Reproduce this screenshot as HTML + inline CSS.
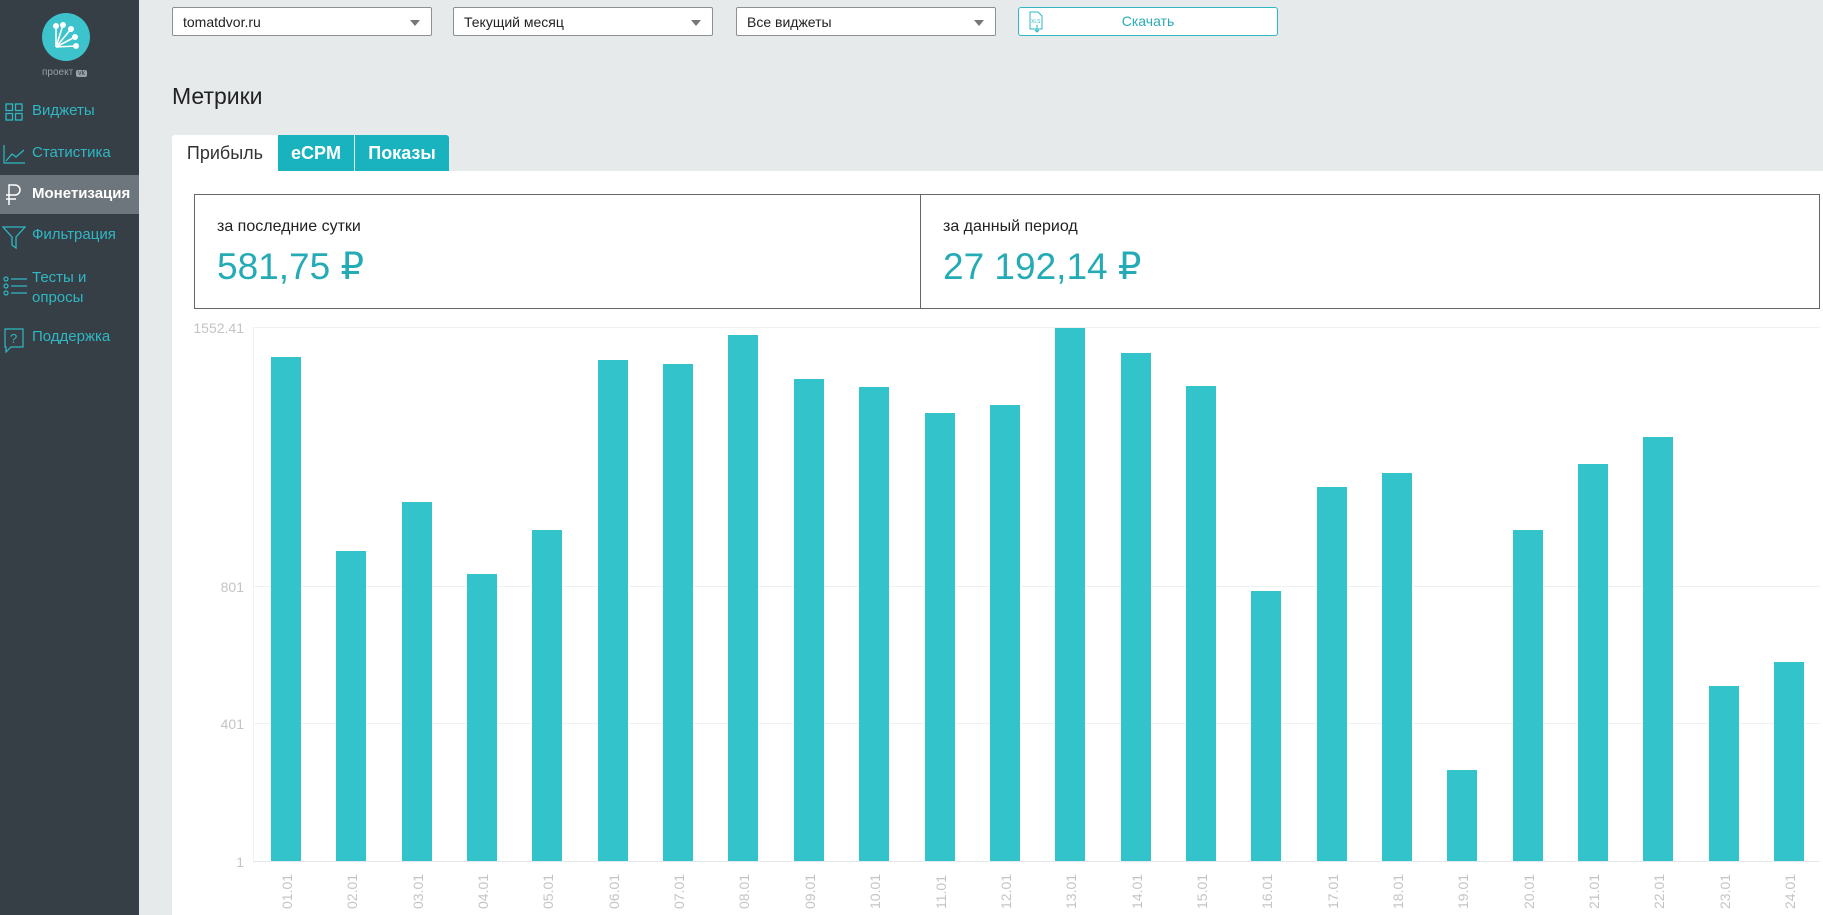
<!DOCTYPE html>
<html><head><meta charset="utf-8"><style>
*{margin:0;padding:0;box-sizing:border-box}
body{width:1823px;height:915px;overflow:hidden;background:#e6eaeb;font-family:"Liberation Sans","DejaVu Sans",sans-serif;position:relative}
.a{position:absolute}
#side{left:0;top:0;width:139px;height:915px;background:#363e46}
.mi{position:absolute;left:0;width:139px;color:#2fb8c4;font-size:15px}
.mi span{position:absolute;left:32px}
.sel{position:absolute;top:7px;height:29px;background:#fff;border:1px solid #8a9096;border-radius:2px;font-size:14px;color:#222;padding:6px 10px}
.sel:after{content:"";position:absolute;right:11px;top:12px;border:5px solid transparent;border-top:6px solid #777}
.tab{position:absolute;top:135px;height:36px;font-size:18px;padding-top:8px;text-align:center}
.bar{position:absolute;width:30px;background:#33c3cb;bottom:54px}
.xl{position:absolute;font-size:14px;color:#c4c4c4;transform:rotate(-90deg);transform-origin:left top;width:40px;line-height:14px}
.yl{position:absolute;font-size:14px;line-height:14px;color:#c4c4c4;right:1579px;text-align:right}
.gl{position:absolute;left:253px;width:1567px;height:1px;background:#eef0f1}
</style></head><body>
<div id="side" class="a">
 <svg class="a" style="left:42px;top:13px" width="48" height="48" viewBox="0 0 48 48"><circle cx="24" cy="24" r="24" fill="#3cc3cc"/>
 <g stroke="#fff" stroke-width="1.6" fill="#fff"><line x1="14" y1="34" x2="14" y2="13"/><line x1="14" y1="34" x2="21" y2="12"/><line x1="14" y1="34" x2="29" y2="16"/><line x1="14" y1="34" x2="33" y2="24"/><line x1="14" y1="34" x2="34" y2="33"/>
 <circle cx="14" cy="13" r="2.2"/><circle cx="21" cy="12" r="2.2"/><circle cx="29" cy="16" r="2.2"/><circle cx="33" cy="24" r="2.2"/><circle cx="34" cy="33" r="2.2"/></g></svg>
 <div class="a" style="left:42px;top:67px;font-size:10px;color:#9aa1a7">проект <span style="background:#9aa1a7;color:#363e46;font-size:7px;padding:0 2px;border-radius:2px">vk</span></div>
 <div class="mi" style="top:102px"><svg class="a" style="left:5px;top:1px" width="18" height="18" fill="none" stroke="#2fb8c4" stroke-width="1.3"><rect x="1" y="1" width="6.5" height="6.5"/><rect x="10.5" y="1" width="6.5" height="6.5"/><rect x="1" y="10.5" width="6.5" height="6.5"/><rect x="10.5" y="10.5" width="6.5" height="6.5"/></svg><span>Виджеты</span></div>
 <div class="mi" style="top:144px"><svg class="a" style="left:3px;top:0" width="22" height="20" fill="none" stroke="#2fb8c4" stroke-width="1.2"><path d="M1 1V19H22M3 17L9 10L13 13L21 6"/></svg><span>Статистика</span></div>
 <div class="mi" style="top:175px;height:39px;background:#6e767d;color:#fff;font-weight:bold"><svg class="a" style="left:5px;top:9px" width="18" height="22" fill="none" stroke="#fff" stroke-width="1.5"><path d="M4 21V1H10A5 5 0 0 1 10 11H1M1 15H11"/></svg><span style="top:10px">Монетизация</span></div>
 <div class="mi" style="top:226px"><svg class="a" style="left:2px;top:-1px" width="24" height="24" fill="none" stroke="#2fb8c4" stroke-width="1.3"><path d="M1 2H23L14 12V23L10 20V12Z"/></svg><span>Фильтрация</span></div>
 <div class="mi" style="top:268px"><svg class="a" style="left:3px;top:8px" width="24" height="22" fill="none" stroke="#2fb8c4" stroke-width="1.2"><circle cx="3" cy="3" r="2"/><circle cx="3" cy="10" r="2"/><circle cx="3" cy="17" r="2"/><path d="M8 3H24M8 10H24M8 17H24"/></svg><span style="line-height:20px">Тесты и<br>опросы</span></div>
 <div class="mi" style="top:328px"><svg class="a" style="left:3px;top:0" width="22" height="26" fill="none" stroke="#2fb8c4" stroke-width="1.2"><path d="M2 1H20V19H8L3 24V19H2Z"/><text x="7" y="15" font-size="13" fill="#2fb8c4" stroke="none">?</text></svg><span>Поддержка</span></div>
</div>

<div class="sel" style="left:172px;width:260px">tomatdvor.ru</div>
<div class="sel" style="left:453px;width:260px">Текущий месяц</div>
<div class="sel" style="left:736px;width:260px">Все виджеты</div>
<div class="a" style="left:1018px;top:7px;width:260px;height:29px;background:#fff;border:1px solid #2fb8c4;border-radius:3px;color:#2aabb6;font-size:14px;text-align:center;padding-top:5px">Скачать
 <svg class="a" style="left:10px;top:3px" width="14" height="22" fill="none" stroke="#2fb8c4" stroke-width="1"><path d="M1 1H9L13 5V18H1Z"/><text x="2" y="12" font-size="5" fill="#2fb8c4" stroke="none">XLS</text><path d="M8 14V21M6 19L8 21L10 19"/></svg></div>

<div class="a" style="left:172px;top:83px;font-size:23px;color:#222">Метрики</div>
<div class="a" style="left:172px;top:171px;width:1651px;height:744px;background:#fff"></div>
<div class="tab" style="left:172px;width:106px;background:#fff;color:#333;border-radius:3px 0 0 0">Прибыль</div>
<div class="tab" style="left:278px;width:76px;background:#19b3bf;color:#fff;font-weight:bold">eCPM</div>
<div class="tab" style="left:355px;width:94px;background:#19b3bf;color:#fff;font-weight:bold;border-radius:0 3px 0 0">Показы</div>

<div class="a" style="left:194px;top:194px;width:1626px;height:115px;border:1px solid #666"></div>
<div class="a" style="left:920px;top:194px;width:1px;height:115px;background:#666"></div>
<div class="a" style="left:217px;top:218px;font-size:16px;color:#222">за последние сутки</div>
<div class="a" style="left:217px;top:245px;font-size:37px;color:#25abb5">581,75 ₽</div>
<div class="a" style="left:943px;top:218px;font-size:16px;color:#222">за данный период</div>
<div class="a" style="left:943px;top:245px;font-size:37px;color:#25abb5">27 192,14 ₽</div>

<div class="gl" style="top:327px"></div><div class="gl" style="top:586px"></div><div class="gl" style="top:723px"></div><div class="gl" style="top:861px;background:#e4e8ea"></div>
<div class="a" style="left:253px;top:327px;width:1px;height:534px;background:#eef0f1"></div>
<div class="yl" style="top:321px">1552.41</div><div class="yl" style="top:580px">801</div><div class="yl" style="top:717px">401</div><div class="yl" style="top:855px">1</div>

<div class="bar" style="left:271px;top:357px"></div>
<div class="bar" style="left:336px;top:551px"></div>
<div class="bar" style="left:402px;top:502px"></div>
<div class="bar" style="left:467px;top:574px"></div>
<div class="bar" style="left:532px;top:530px"></div>
<div class="bar" style="left:598px;top:360px"></div>
<div class="bar" style="left:663px;top:364px"></div>
<div class="bar" style="left:728px;top:335px"></div>
<div class="bar" style="left:794px;top:379px"></div>
<div class="bar" style="left:859px;top:387px"></div>
<div class="bar" style="left:925px;top:413px"></div>
<div class="bar" style="left:990px;top:405px"></div>
<div class="bar" style="left:1055px;top:328px"></div>
<div class="bar" style="left:1121px;top:353px"></div>
<div class="bar" style="left:1186px;top:386px"></div>
<div class="bar" style="left:1251px;top:591px"></div>
<div class="bar" style="left:1317px;top:487px"></div>
<div class="bar" style="left:1382px;top:473px"></div>
<div class="bar" style="left:1447px;top:770px"></div>
<div class="bar" style="left:1513px;top:530px"></div>
<div class="bar" style="left:1578px;top:464px"></div>
<div class="bar" style="left:1643px;top:437px"></div>
<div class="bar" style="left:1709px;top:686px"></div>
<div class="bar" style="left:1774px;top:662px"></div>

<div class="xl" style="left:280px;top:909px">01.01</div>
<div class="xl" style="left:345px;top:909px">02.01</div>
<div class="xl" style="left:411px;top:909px">03.01</div>
<div class="xl" style="left:476px;top:909px">04.01</div>
<div class="xl" style="left:541px;top:909px">05.01</div>
<div class="xl" style="left:607px;top:909px">06.01</div>
<div class="xl" style="left:672px;top:909px">07.01</div>
<div class="xl" style="left:737px;top:909px">08.01</div>
<div class="xl" style="left:803px;top:909px">09.01</div>
<div class="xl" style="left:868px;top:909px">10.01</div>
<div class="xl" style="left:934px;top:909px">11.01</div>
<div class="xl" style="left:999px;top:909px">12.01</div>
<div class="xl" style="left:1064px;top:909px">13.01</div>
<div class="xl" style="left:1130px;top:909px">14.01</div>
<div class="xl" style="left:1195px;top:909px">15.01</div>
<div class="xl" style="left:1260px;top:909px">16.01</div>
<div class="xl" style="left:1326px;top:909px">17.01</div>
<div class="xl" style="left:1391px;top:909px">18.01</div>
<div class="xl" style="left:1456px;top:909px">19.01</div>
<div class="xl" style="left:1522px;top:909px">20.01</div>
<div class="xl" style="left:1587px;top:909px">21.01</div>
<div class="xl" style="left:1652px;top:909px">22.01</div>
<div class="xl" style="left:1718px;top:909px">23.01</div>
<div class="xl" style="left:1783px;top:909px">24.01</div>
</body></html>
